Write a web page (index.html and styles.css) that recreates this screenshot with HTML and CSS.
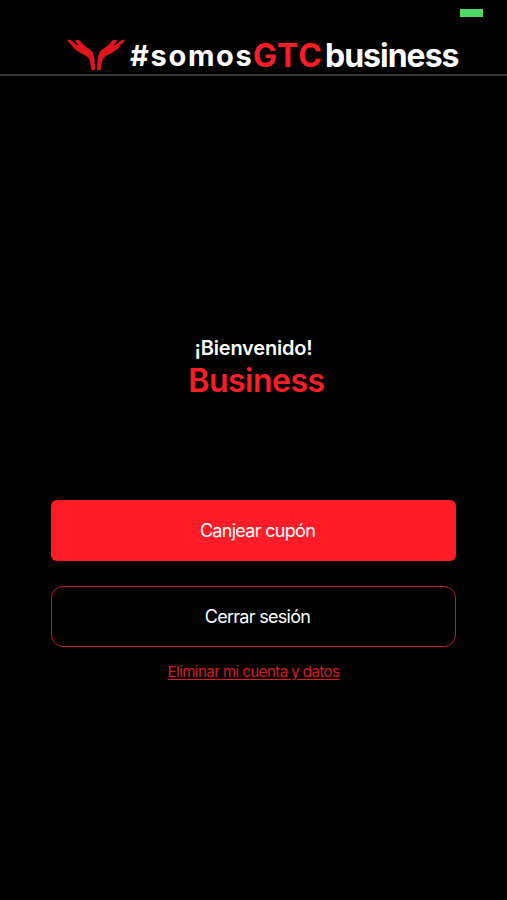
FILE: index.html
```html
<!DOCTYPE html>
<html lang="es">
<head>
    <meta charset="UTF-8">
    <meta name="viewport" content="width=device-width, initial-scale=1.0">
    <title>somosGTCbusiness</title>
    <link rel="stylesheet" href="styles.css">
</head>
<body>
    <div class="status">
        <span class="battery"></span>
    </div>
    <header class="header">
        <svg class="logo" width="60" height="32" viewBox="0 0 60 32">
            <g id="hand" fill="#e2151c">
                <path d="M1.300 1C3 .2 4.800 .8 6.500 2.500C8.500 4.500 10.500 6 12.800 6.600L9.600 2.800C8.500 .8 12 .2 13.500 1.300L17.500 5.800C20 8.500 23.500 9.500 26 12.500C28.500 16.500 29 22 29 31L25.300 31C24.800 25 24.300 20.500 21.500 18C18.500 15.500 14 14.300 11.500 12C8.500 10.500 7.500 8.500 6 6.500C4.500 4.500 2.500 3.500 1.300 1Z"/>
            </g>
            <use href="#hand" transform="translate(60.200 0) scale(-1 1)"/>
        </svg>
        <h1 class="brand"><span class="somos">#somos</span><span class="gtc">GTC</span><span class="business">business</span></h1>
    </header>
    <main class="main">
        <p class="welcome">¡Bienvenido!</p>
        <h2 class="name">Business</h2>
        <button class="btn redeem">Canjear cupón</button>
        <button class="btn logout">Cerrar sesión</button>
        <a class="delete" href="#">Eliminar mi cuenta y datos</a>
    </main>
</body>
</html>
```

FILE: styles.css
```css
* {
    box-sizing: border-box;
    margin: 0;
    padding: 0;
}
body {
    background-color: #000;
    color: #fff;
    font-family: Inter, "Liberation Sans", sans-serif;
    height: 900px;
    overflow: hidden;
}
.status {
    display: flex;
    justify-content: flex-end;
    height: 36px;
    padding: 9px 24px 0 0;
}
.battery {
    width: 23px;
    height: 8px;
    background-color: #4cd964;
}
.header {
    display: flex;
    height: 40px;
    padding-left: 66px;
    border-bottom: 2px solid #363636;
}
.logo {
    flex: none;
    margin-top: 3px;
}
.brand {
    display: flex;
    margin-left: 4px;
    line-height: 39px;
    white-space: nowrap;
    font-weight: 700;
}
.somos {
    width: 123px;
    font-size: 29px;
    letter-spacing: 1.7px;
}
.gtc {
    width: 72px;
    color: #ff1c27;
    font-size: 32px;
    letter-spacing: 0.9px;
}
.business {
    font-size: 32px;
    letter-spacing: -1px;
}
.main {
    display: flex;
    flex-direction: column;
    align-items: center;
    padding: 258px 51px 0;
}
.welcome {
    font-size: 20px;
    font-weight: 600;
    line-height: 28px;
    letter-spacing: -0.2px;
}
.name {
    margin: 0 0 101px 6px;
    color: #ff1c27;
    font-size: 32px;
    font-weight: 600;
    line-height: 37px;
    letter-spacing: -0.5px;
}
.btn {
    width: 100%;
    height: 61px;
    color: #fff;
    font-family: inherit;
    font-size: 18px;
    letter-spacing: -0.7px;
    border: 0;
}
.redeem {
    padding-left: 8px;
    background-color: #ff1c27;
    border-radius: 6px;
}
.logout {
    margin-top: 25px;
    padding-left: 8px;
    background-color: #000;
    border: 1px solid #c91b23;
    border-radius: 12px;
}
.delete {
    margin-top: 14px;
    color: #d81c25;
    font-size: 15px;
    line-height: 22px;
    letter-spacing: -0.54px;
    text-underline-offset: 2px;
}
```
